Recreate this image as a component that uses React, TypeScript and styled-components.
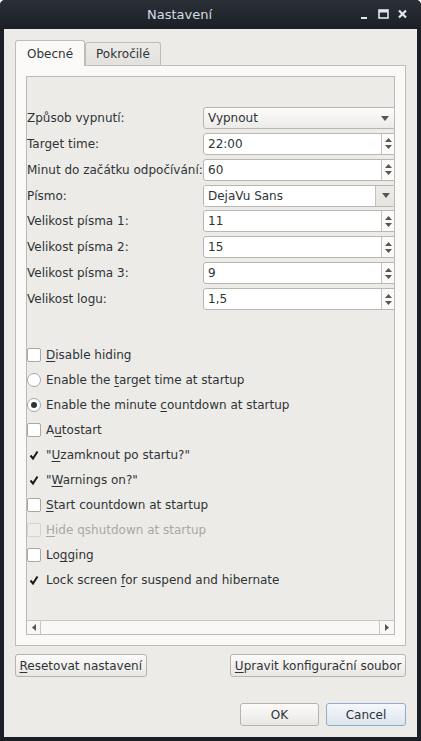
import React from "react";
import styled, { createGlobalStyle, css } from "styled-components";

const Global = createGlobalStyle`
  html, body { margin: 0; padding: 0; background: #ffffff; }
  body {
    font-family: "DejaVu Sans", "Noto Sans", sans-serif;
    font-size: 12px;
    color: #2e3436;
  }
  * { box-sizing: border-box; }
`;

const Window = styled.div`
  width: 421px;
  height: 741px;
  background: #1c2026;
  border-radius: 5px 5px 0 0;
  display: flex;
  flex-direction: column;
  overflow: hidden;
`;

const TitleBar = styled.div`
  height: 29px;
  flex-shrink: 0;
  display: flex;
  align-items: center;
  background: linear-gradient(#2b3038, #1b1f25);
  padding-right: 13px;
`;

const Title = styled.div`
  flex: 1;
  text-align: center;
  color: #d6dde6;
  font-size: 13px;
`;

const WinButtons = styled.div`
  display: flex;
  align-items: center;
  gap: 8px;
`;

const Body = styled.div`
  flex: 1;
  margin: 0 4px 4px;
  background: #edebe7;
  padding: 11px;
  display: flex;
  flex-direction: column;
`;

const TabWidget = styled.div`
  flex: 1;
  display: flex;
  flex-direction: column;
`;

const TabBar = styled.div`
  height: 26px;
  display: flex;
  align-items: flex-end;
  position: relative;
  z-index: 1;
`;

const Tab = styled.div<{ $active?: boolean }>`
  border: 1px solid #bfbcb7;
  border-bottom: none;
  border-radius: 3px 3px 0 0;
  padding: 0 10px;
  display: flex;
  align-items: center;
  white-space: nowrap;
  ${(p) =>
    p.$active
      ? css`
          height: 26px;
          background: #fbf9f7;
          padding: 0 11px;
        `
      : css`
          height: 23px;
          margin-bottom: 1px;
          background: linear-gradient(#eceae6, #e3e1dd);
        `}
`;

const Pane = styled.div`
  flex: 1;
  margin-top: -1px;
  border: 1px solid #c0bdb8;
  background: #fbf9f7;
  padding: 10px;
  display: flex;
`;

const ScrollArea = styled.div`
  flex: 1;
  border: 1px solid #bcb9b4;
  background: #edebe7;
  display: flex;
  flex-direction: column;
  overflow: hidden;
`;

const Viewport = styled.div`
  flex: 1;
  overflow: hidden;
  padding-top: 30px;
`;

const FormGrid = styled.div`
  display: grid;
  grid-template-columns: 176px 193px;
  row-gap: 3.86px;
  align-items: center;
`;

const Label = styled.div`
  white-space: nowrap;
`;

const fieldBase = css`
  height: 22px;
  border: 1px solid #b9b6b1;
  border-radius: 3px;
  display: flex;
  align-items: stretch;
  overflow: hidden;
`;

const ComboBox = styled.div`
  ${fieldBase}
  background: linear-gradient(#fdfcfb, #ecebe8);
`;

const FieldInput = styled.div<{ $white?: boolean }>`
  flex: 1;
  display: flex;
  align-items: center;
  padding-left: 4px;
  white-space: nowrap;
  ${(p) => p.$white && css`background: #ffffff;`}
`;

const EditCombo = styled.div`
  ${fieldBase}
  background: #ffffff;
`;

const SpinBox = styled.div`
  ${fieldBase}
  background: #ffffff;
`;

const DropButton = styled.div<{ $separate?: boolean }>`
  width: 20px;
  display: flex;
  align-items: center;
  justify-content: center;
  ${(p) =>
    p.$separate &&
    css`
      border-left: 1px solid #c4c1bc;
      background: linear-gradient(#efedea, #e5e3df);
    `}
`;

const SpinButtons = styled.div`
  width: 14px;
  border-left: 1px solid #c4c1bc;
  display: flex;
  flex-direction: column;
  align-items: center;
  justify-content: center;
  gap: 3px;
  background: #fbfaf9;
`;

const CheckList = styled.div`
  margin-top: 32.5px;
  display: flex;
  flex-direction: column;
`;

const CheckRow = styled.div<{ $disabled?: boolean }>`
  height: 25px;
  display: flex;
  align-items: center;
  gap: 5px;
  white-space: nowrap;
  color: ${(p) => (p.$disabled ? "#aaa8a4" : "#2e3436")};
`;

const Box = styled.div<{ $disabled?: boolean; $checked?: boolean }>`
  width: 14px;
  height: 14px;
  border-radius: 2px;
  display: flex;
  align-items: center;
  justify-content: center;
  ${(p) =>
    p.$checked
      ? css`
          border: 1px solid transparent;
          background: transparent;
        `
      : p.$disabled
      ? css`
          border: 1px solid #d6d3ce;
          background: #efedea;
        `
      : css`
          border: 1px solid #aaa7a2;
          background: #ffffff;
        `}
`;

const Radio = styled.div`
  width: 14px;
  height: 14px;
  border: 1px solid #aaa7a2;
  border-radius: 50%;
  background: #ffffff;
  display: flex;
  align-items: center;
  justify-content: center;
`;

const RadioDot = styled.div`
  width: 6px;
  height: 6px;
  border-radius: 50%;
  background: #2e3436;
`;

const HScroll = styled.div`
  height: 14px;
  flex-shrink: 0;
  border-top: 1px solid #c9c6c1;
  background: #f8f7f5;
  display: flex;
`;

const ScrollButton = styled.div<{ $side: "left" | "right" }>`
  width: 14px;
  display: flex;
  align-items: center;
  justify-content: center;
  ${(p) =>
    p.$side === "left"
      ? css`border-right: 1px solid #c9c6c1;`
      : css`border-left: 1px solid #c9c6c1; width: 15px;`}
`;

const ScrollTrack = styled.div`
  flex: 1;
  background: #f9f8f6;
`;

const ButtonRow = styled.div<{ $end?: boolean }>`
  display: flex;
  justify-content: ${(p) => (p.$end ? "flex-end" : "space-between")};
  gap: 7px;
`;

const ActionRow = styled(ButtonRow)`
  margin-top: 8px;
`;

const DialogRow = styled(ButtonRow)`
  margin-top: 26px;
`;

const Button = styled.button<{ $default?: boolean; $min?: number }>`
  height: 23px;
  min-width: ${(p) => p.$min ?? 0}px;
  padding: 0 3.5px;
  font-family: inherit;
  font-size: 12px;
  color: #2e3436;
  border-radius: 3px;
  white-space: nowrap;
  ${(p) =>
    p.$default
      ? css`
          border: 1px solid #8eadcb;
          background: linear-gradient(#f5f8fb, #dde5ee);
        `
      : css`
          border: 1px solid #b7b4af;
          background: linear-gradient(#fcfbfa, #e9e7e4);
        `}
`;

const Mn = styled.span`
  text-decoration: underline;
  text-underline-offset: 2px;
`;

const ArrowDown = () => (
  <svg width="8" height="5" viewBox="0 0 8 5">
    <path d="M0 0 H8 L4 5 Z" fill="#555753" />
  </svg>
);
const ArrowUp = () => (
  <svg width="7" height="4" viewBox="0 0 7 4">
    <path d="M0 4 H7 L3.5 0 Z" fill="#555753" />
  </svg>
);
const ArrowDownSmall = () => (
  <svg width="7" height="4" viewBox="0 0 7 4">
    <path d="M0 0 H7 L3.5 4 Z" fill="#555753" />
  </svg>
);
const ArrowSide = ({ dir }: { dir: "left" | "right" }) => (
  <svg width="4" height="7" viewBox="0 0 4 7">
    <path d={dir === "left" ? "M4 0 V7 L0 3.5 Z" : "M0 0 V7 L4 3.5 Z"} fill="#555753" />
  </svg>
);

const Check = () => (
  <svg width="12" height="12" viewBox="0 0 12 12">
    <path d="M2.5 6.5 L5 9.5 L9.5 2.5" stroke="#1a1a1a" strokeWidth="2" fill="none" />
  </svg>
);

const Spin = ({ value }: { value: string }) => (
  <SpinBox>
    <FieldInput>{value}</FieldInput>
    <SpinButtons>
      <ArrowUp />
      <ArrowDownSmall />
    </SpinButtons>
  </SpinBox>
);

type CheckItem = {
  kind: "check" | "radio";
  checked?: boolean;
  disabled?: boolean;
  pre: string;
  mn: string;
  post: string;
};

const items: CheckItem[] = [
  { kind: "check", pre: "", mn: "D", post: "isable hiding" },
  { kind: "radio", pre: "Enable the ", mn: "t", post: "arget time at startup" },
  { kind: "radio", checked: true, pre: "Enable the minute ", mn: "c", post: "ountdown at startup" },
  { kind: "check", pre: "A", mn: "u", post: "tostart" },
  { kind: "check", checked: true, pre: "\"", mn: "U", post: "zamknout po startu?\"" },
  { kind: "check", checked: true, pre: "\"", mn: "W", post: "arnings on?\"" },
  { kind: "check", pre: "", mn: "S", post: "tart countdown at startup" },
  { kind: "check", disabled: true, pre: "", mn: "H", post: "ide qshutdown at startup" },
  { kind: "check", pre: "Lo", mn: "g", post: "ging" },
  { kind: "check", checked: true, pre: "Lock screen ", mn: "f", post: "or suspend and hibernate" },
];

export default function App() {
  return (
    <>
      <Global />
      <Window>
        <TitleBar>
          <Title>Nastavení</Title>
          <WinButtons>
            <svg width="11" height="11" viewBox="0 0 11 11">
              <rect x="2" y="8" width="6" height="2" fill="#e4e8ee" />
            </svg>
            <svg width="11" height="11" viewBox="0 0 11 11">
              <rect x="1" y="1" width="9" height="8" fill="none" stroke="#e4e8ee" strokeWidth="1.6" />
              <rect x="1" y="1" width="9" height="2.5" fill="#e4e8ee" />
            </svg>
            <svg width="11" height="11" viewBox="0 0 11 11">
              <path d="M2 1.5 L9 8.5 M9 1.5 L2 8.5" stroke="#e4e8ee" strokeWidth="2.2" />
            </svg>
          </WinButtons>
        </TitleBar>
        <Body>
          <TabWidget>
            <TabBar>
              <Tab $active>Obecné</Tab>
              <Tab>Pokročilé</Tab>
            </TabBar>
            <Pane>
              <ScrollArea>
                <Viewport>
                  <FormGrid>
                    <Label>Způsob vypnutí:</Label>
                    <ComboBox>
                      <FieldInput>Vypnout</FieldInput>
                      <DropButton>
                        <ArrowDown />
                      </DropButton>
                    </ComboBox>
                    <Label>Target time:</Label>
                    <Spin value="22:00" />
                    <Label>Minut do začátku odpočívání:</Label>
                    <Spin value="60" />
                    <Label>Písmo:</Label>
                    <EditCombo>
                      <FieldInput $white>DejaVu Sans</FieldInput>
                      <DropButton $separate>
                        <ArrowDown />
                      </DropButton>
                    </EditCombo>
                    <Label>Velikost písma 1:</Label>
                    <Spin value="11" />
                    <Label>Velikost písma 2:</Label>
                    <Spin value="15" />
                    <Label>Velikost písma 3:</Label>
                    <Spin value="9" />
                    <Label>Velikost logu:</Label>
                    <Spin value="1,5" />
                  </FormGrid>
                  <CheckList>
                    {items.map((it, i) => (
                      <CheckRow key={i} $disabled={it.disabled}>
                        {it.kind === "radio" ? (
                          <Radio>{it.checked && <RadioDot />}</Radio>
                        ) : (
                          <Box $disabled={it.disabled} $checked={it.checked}>
                            {it.checked && <Check />}
                          </Box>
                        )}
                        <span>
                          {it.pre}
                          <Mn>{it.mn}</Mn>
                          {it.post}
                        </span>
                      </CheckRow>
                    ))}
                  </CheckList>
                </Viewport>
                <HScroll>
                  <ScrollButton $side="left">
                    <ArrowSide dir="left" />
                  </ScrollButton>
                  <ScrollTrack />
                  <ScrollButton $side="right">
                    <ArrowSide dir="right" />
                  </ScrollButton>
                </HScroll>
              </ScrollArea>
            </Pane>
          </TabWidget>
          <ActionRow>
            <Button>
              <Mn>R</Mn>esetovat nastavení
            </Button>
            <Button>
              <Mn>U</Mn>pravit konfigurační soubor
            </Button>
          </ActionRow>
          <DialogRow $end>
            <Button $min={79}>OK</Button>
            <Button $min={80} $default>
              Cancel
            </Button>
          </DialogRow>
        </Body>
      </Window>
    </>
  );
}
